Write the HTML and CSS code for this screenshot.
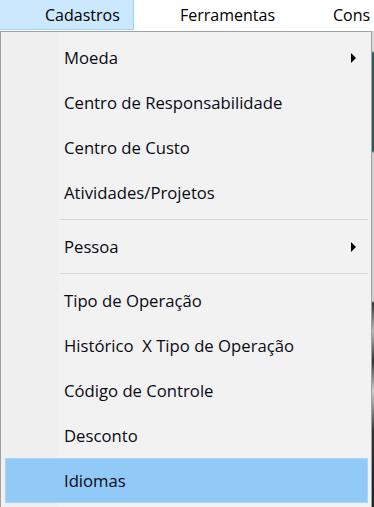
FILE: index.html
```html
<!DOCTYPE html>
<html lang="pt">
<head>
<meta charset="utf-8">
<link rel="stylesheet" href="styles.css">
</head>
<body>
<div class="menubar">
  <div class="bar-item bar-item--active">Cadastros</div>
  <div class="bar-item bar-item--ferr">Ferramentas</div>
  <div class="bar-item bar-item--cons">Cons</div>
</div>
<div class="stage">
  <div class="menu">
    <div class="item"><span class="label">Moeda</span><span class="arrow"></span></div>
    <div class="item"><span class="label">Centro de Responsabilidade</span></div>
    <div class="item"><span class="label">Centro de Custo</span></div>
    <div class="item"><span class="label">Atividades/Projetos</span></div>
    <div class="sep"></div>
    <div class="item"><span class="label">Pessoa</span><span class="arrow"></span></div>
    <div class="sep"></div>
    <div class="item"><span class="label">Tipo de Operação</span></div>
    <div class="item"><span class="label">Histórico&nbsp; X Tipo de Operação</span></div>
    <div class="item"><span class="label">Código de Controle</span></div>
    <div class="item"><span class="label">Desconto</span></div>
    <div class="item item--hover"><span class="label">Idiomas</span></div>
  </div>
  <div class="behind"></div>
</div>
</body>
</html>
```

FILE: styles.css
```css
html, body {
  margin: 0;
  padding: 0;
  background: #ffffff;
  overflow: hidden;
}
body {
  width: 374px;
  height: 507px;
  font-family: "Open Sans", "Noto Sans", sans-serif;
  font-size: 16px;
  color: #000;
}
.menubar {
  display: flex;
  height: 31px;
  background: #ffffff;
  white-space: nowrap;
  overflow: hidden;
}
.bar-item {
  height: 30px;
  line-height: 31px;
  box-sizing: border-box;
  flex: none;
}
.bar-item--active {
  width: 134px;
  padding-left: 45px;
  background: #cce8ff;
  border: 1px solid #99d1ff;
  border-left: none;
  border-top: none;
}
.bar-item--ferr {
  padding-left: 46px;
  width: 155px;
}
.bar-item--cons {
  padding-left: 44px;
}
.stage {
  display: flex;
  height: 476px;
}
.menu {
  width: 372px;
  box-sizing: border-box;
  border: 1px solid #a0a0a0;
  border-bottom: none;
  background: linear-gradient(to right, #f0f0f0 0, #f0f0f0 58px, #f2f2f2 58px);
  padding: 3px 3px 0 4px;
  flex: none;
  font-size: 16.7px;
  color: #0a0a14;
}
.item {
  height: 45px;
  box-sizing: border-box;
  display: flex;
  align-items: center;
  padding-left: 58px;
  padding-right: 11px;
  border: 1px solid transparent;
}
.label {
  flex: 1;
  white-space: nowrap;
}
.item--hover {
  background: #91c9f7;
  border-color: #aad5f8;
}
.arrow {
  width: 0;
  height: 0;
  border-top: 5px solid transparent;
  border-bottom: 5px solid transparent;
  border-left: 5px solid #000;
}
.sep {
  height: 9px;
  display: flex;
  align-items: center;
  padding-left: 55px;
}
.sep::before {
  content: "";
  flex: 1;
  height: 1px;
  background: #d7d7d7;
}
.behind {
  flex: 1;
  background: linear-gradient(to bottom, #d9d9d9 0, #d9d9d9 20px, #2f5d5a 22px, #2f5d5a 120px, #d0d0d0 122px, #d0d0d0 270px, #333 272px, #bbb 300px, #333 330px, #cfcfcf 360px, #333 400px, #222 476px);
}
```
